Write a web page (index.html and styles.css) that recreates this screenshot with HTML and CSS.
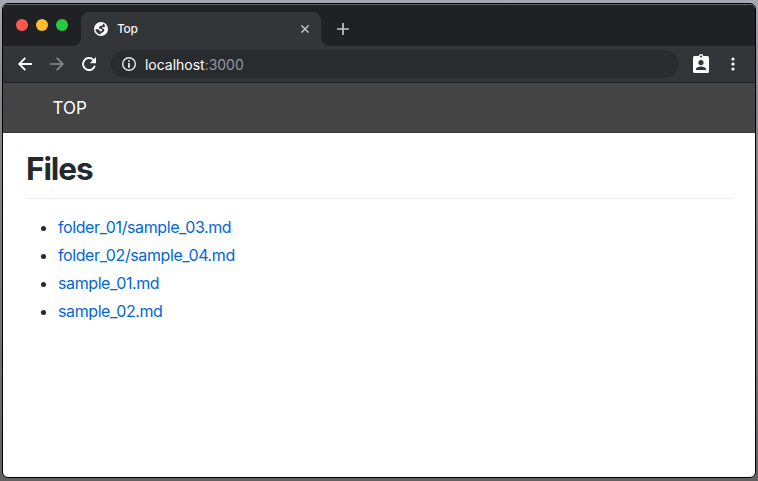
FILE: index.html
```html
<!DOCTYPE html>
<html lang="en">
<head>
<meta charset="utf-8">
<title>Top</title>
<link rel="stylesheet" href="styles.css">
</head>
<body>
<div class="window">
  <div class="tabstrip">
    <div class="lights"><i class="light red"></i><i class="light yellow"></i><i class="light green"></i></div>
    <div class="tab">
      <svg class="globe" width="14" height="14" viewBox="0 0 14 14"><circle cx="7" cy="7" r="7" fill="#fff"/><path d="M8.3 1.6 9 2.8 8 3.7H6.5L5 5.2V6.4L7.6 7.1 8.2 8.2 7 9.4 6.2 9.2 4.8 7.6 1.5 7C1.5 9.6 3.8 12.2 6.3 12.4L6.8 11.2 8.6 10.5 10.2 9V7.3L9 6.4 7.7 5.9 8.2 5.2H10.2L11.4 3.8Q10.2 2.1 8.3 1.6Z" fill="#323639"/></svg>
      <span class="tab-title">Top</span>
      <svg class="close" width="8" height="8" viewBox="0 0 8 8"><path d="M.4.4 7.6 7.6M7.6.4.4 7.6" stroke="#bec1c5" stroke-width="1.5"/></svg>
    </div>
    <svg class="plus" width="12" height="12" viewBox="0 0 12 12"><path d="M6 0v12M0 6h12" stroke="#c4c7ca" stroke-width="1.7"/></svg>
  </div>
  <div class="toolbar">
    <svg class="back" width="14" height="14" viewBox="0 0 14 14"><path d="M14 7H1.4M7.3.8 1.2 7l6.1 6.2" fill="none" stroke="#fff" stroke-width="1.8"/></svg>
    <svg class="forward" width="14" height="14" viewBox="0 0 14 14"><path d="M0 7h12.6M6.7.8 12.8 7l-6.1 6.2" fill="none" stroke="#85888a" stroke-width="1.7"/></svg>
    <svg class="reload" width="14" height="14" viewBox="0 0 14 14"><path d="M12.8 8.8A6 6 0 1 1 11.3 2.8L12.2 3.8" fill="none" stroke="#fff" stroke-width="1.9"/><path d="M14 0v6.2H7.8Z" fill="#fff"/></svg>
    <div class="omnibox">
      <svg width="14" height="14" viewBox="0 0 14 14"><circle cx="7" cy="7" r="6.3" fill="none" stroke="#e8eaed" stroke-width="1.4"/><path d="M6.1 3.2h1.8v1.6H6.1zM6.1 6h1.8v4.8H6.1z" fill="#e8eaed"/></svg>
      <span class="url"><b>localhost</b>:3000</span>
    </div>
    <svg class="profile" width="16" height="19" viewBox="0 0 16 19"><path fill="#fff" fill-rule="evenodd" d="M1.6 2h3.9a2.6 2.6 0 0 1 5 0h3.9Q16 2 16 3.6v13.8Q16 19 14.4 19H1.6Q0 19 0 17.4V3.6Q0 2 1.6 2ZM8 1.4a1 1 0 1 0 0 2.2 1 1 0 0 0 0-2.2ZM8 6a2.6 2.6 0 1 0 0 5.2A2.6 2.6 0 0 0 8 6ZM3 16h10v-.8c0-1.7-3-2.6-5-2.6s-5 .9-5 2.6Z"/></svg>
    <svg class="menu" width="4" height="14" viewBox="0 0 4 14"><g fill="#fff"><circle cx="2" cy="2" r="1.6"/><circle cx="2" cy="7" r="1.6"/><circle cx="2" cy="12" r="1.6"/></g></svg>
  </div>
  <nav class="navbar"><a>TOP</a></nav>
  <main class="content">
    <h1>Files</h1>
    <ul>
      <li><a>folder_01/sample_03.md</a></li>
      <li><a>folder_02/sample_04.md</a></li>
      <li><a>sample_01.md</a></li>
      <li><a>sample_02.md</a></li>
    </ul>
  </main>
</div>
</body>
</html>
```
FILE: styles.css
```css
* { box-sizing: border-box; }
body {
  margin: 0;
  height: 481px;
  padding: 3px 2px;
  overflow: hidden;
  background: linear-gradient(#a9a9b3, #88888e 20%, #77777b 60%, #626061);
  font-family: Inter, "Liberation Sans", sans-serif;
}
svg { display: block; flex: none; }
.window {
  width: 754px;
  height: 475px;
  border: 1px solid #000;
  border-radius: 6px;
  overflow: hidden;
  background: #fff;
  display: flex;
  flex-direction: column;
}
.tabstrip {
  height: 42px;
  flex: none;
  display: flex;
  background: #202124;
  box-shadow: inset 0 1px #626365;
}
.lights { display: flex; gap: 8px; padding: 15px 0 0 13px; width: 78px; }
.light { width: 12px; height: 12px; border-radius: 50%; }
.red { background: #ff5650; }
.yellow { background: #ffbd2e; }
.green { background: #28ca41; }
.tab {
  position: relative;
  width: 240px;
  height: 34px;
  margin-top: 8px;
  padding: 0 12px 0 13px;
  display: flex;
  align-items: center;
  background: #323639;
  border-radius: 8px 8px 0 0;
}
.tab::before, .tab::after {
  content: "";
  position: absolute;
  bottom: 0;
  width: 8px;
  height: 8px;
}
.tab::before { left: -8px; background: radial-gradient(circle at 0 0, transparent 7.5px, #323639 8px); }
.tab::after { right: -8px; background: radial-gradient(circle at 100% 0, transparent 7.5px, #323639 8px); }
.tab-title { margin: -2px 0 0 9px; color: #f1f3f4; font-size: 12px; font-weight: 450; letter-spacing: -.3px; }
.close { margin-left: auto; }
.plus { margin: 19px 0 0 16px; }
.toolbar {
  height: 37px;
  flex: none;
  display: flex;
  align-items: center;
  padding-left: 15px;
  background: #323639;
  border-bottom: 1px solid #1f2123;
}
.forward, .reload { margin-left: 18px; }
.omnibox {
  width: 568px;
  height: 28px;
  margin-left: 15px;
  padding-left: 11px;
  display: flex;
  align-items: center;
  gap: 9px;
  border-radius: 14px;
  background: #282c2f;
}
.url { font-size: 14px; font-weight: 430; letter-spacing: -.02px; color: #94989c; }
.url b { font-weight: 430; color: #fff; }
.profile { margin: 0 0 2px 14px; }
.menu { margin-left: 22px; }
.navbar {
  height: 50px;
  flex: none;
  padding-left: 49.5px;
  background: #444;
  color: #fff;
  font-size: 17px;
  line-height: 50px;
  border-bottom: 1px solid #3a3a3a;
}
.content { padding: 16px 23px; color: #24292e; }
h1 {
  margin: 0 0 16px;
  height: 50px;
  border-bottom: 1px solid #eaecef;
  font-size: 31.5px;
  font-weight: 680;
  letter-spacing: -1.1px;
  line-height: 40px;
}
ul { margin: 0; padding-left: 32px; font-size: 16px; line-height: 24px; }
li + li { margin-top: 4px; }
li a { color: #0366d6; font-weight: 430; letter-spacing: -.4px; }
```
